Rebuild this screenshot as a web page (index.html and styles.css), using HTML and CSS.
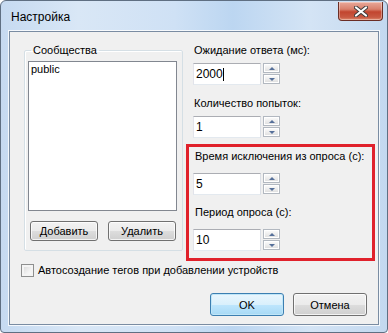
FILE: index.html
```html
<!DOCTYPE html>
<html lang="ru">
<head>
<meta charset="utf-8">
<title>Настройка</title>
<link rel="stylesheet" href="styles.css">
</head>
<body>
<div class="window">
  <div class="titlebar">
    <span class="title">Настройка</span>
    <div class="close">
      <svg width="14" height="11" viewBox="0 0 14 11"><path d="M2 1.5 L12 9.5 M12 1.5 L2 9.5" stroke="#3b3b3b" stroke-width="4" stroke-linecap="round"/><path d="M2 1.5 L12 9.5 M12 1.5 L2 9.5" stroke="#ffffff" stroke-width="2.2" stroke-linecap="round"/></svg>
    </div>
  </div>
  <div class="client">
    <div class="main">
      <fieldset class="group">
        <legend>Сообщества</legend>
        <div class="listbox"><div class="item">public</div></div>
        <div class="group-buttons">
          <div class="btn">Добавить</div>
          <div class="btn">Удалить</div>
        </div>
      </fieldset>
      <div class="fields">
        <div class="label">Ожидание ответа (мс):</div>
        <div class="spin-row">
          <div class="input">2000<span class="caret"></span></div>
          <div class="spin"><div class="sb"><span class="up"></span></div><div class="sb"><span class="down"></span></div></div>
        </div>
        <div class="label l2">Количество попыток:</div>
        <div class="spin-row">
          <div class="input">1</div>
          <div class="spin"><div class="sb"><span class="up"></span></div><div class="sb"><span class="down"></span></div></div>
        </div>
        <div class="highlight">
          <div class="label">Время исключения из опроса (с):</div>
          <div class="spin-row r3">
            <div class="input">5</div>
            <div class="spin"><div class="sb"><span class="up"></span></div><div class="sb"><span class="down"></span></div></div>
          </div>
          <div class="label l4">Период опроса (с):</div>
          <div class="spin-row r4">
            <div class="input">10</div>
            <div class="spin"><div class="sb"><span class="up"></span></div><div class="sb"><span class="down"></span></div></div>
          </div>
        </div>
      </div>
    </div>
    <div class="check-row">
      <span class="checkbox"></span>
      <span>Автосоздание тегов при добавлении устройств</span>
    </div>
    <div class="dialog-buttons">
      <div class="btn wide default">OK</div>
      <div class="btn wide">Отмена</div>
    </div>
  </div>
</div>
</body>
</html>
```

FILE: styles.css
```css
* { box-sizing: border-box; }
html, body { margin: 0; padding: 0; background: #ffffff; }
body { font-family: "Liberation Sans", Arial, sans-serif; font-size: 11px; color: #000; }

.window {
  width: 388px;
  height: 333px;
  border: 1px solid #5f6f82;
  border-radius: 6px 6px 4px 4px;
  background: linear-gradient(90deg, #c6daf1 0%, #d9e7f6 20%, #cfe1f5 45%, #bcd6f1 60%, #d4e4f5 80%, #c3d8ef 100%);
  display: flex;
  flex-direction: column;
  padding: 0 8px 7px 8px;
}

.titlebar {
  height: 30px;
  display: flex;
  align-items: flex-start;
  justify-content: space-between;
}
.title {
  font-size: 12px;
  margin: 9px 0 0 2px;
  color: #000;
}
.close {
  width: 45px;
  height: 19px;
  margin: 1px -4px 0 0;
  border: 1px solid #6a2d25;
  border-top: none;
  border-radius: 0 0 4px 4px;
  background: linear-gradient(180deg, #e9a99a 0%, #d9806c 40%, #c2452f 55%, #c85a43 85%, #e08a6e 100%);
  box-shadow: inset 0 0 0 1px rgba(255,255,255,0.35);
  display: flex;
  align-items: center;
  justify-content: center;
}

.client {
  flex: 1;
  background: #f0f0f0;
  border: 1px solid #7a8ca2;
  box-shadow: 0 0 0 1px rgba(255,255,255,0.8);
  display: flex;
  flex-direction: column;
  padding: 12px 0 0 0;
}

.main { display: flex; align-items: flex-start; }

.group {
  margin: 0 0 0 14px;
  width: 159px;
  height: 207px;
  border: 1px solid #d5dfe5;
  border-radius: 2px;
  box-shadow: inset 1px 1px 0 #ffffff;
  padding: 4px 5px 0 3px;
}
.group legend {
  padding: 0 2px;
  margin-left: 3px;
  line-height: 13px;
}
.listbox {
  height: 150px;
  background: #fff;
  border: 1px solid #828790;
  padding: 1px 2px;
}
.item { line-height: 13px; }

.group-buttons {
  display: flex;
  gap: 10px;
  margin: 10px 0 0 2px;
}

.btn {
  height: 20px;
  width: 68px;
  border: 1px solid #707070;
  border-radius: 3px;
  background: linear-gradient(180deg, #f2f2f2 0%, #ebebeb 50%, #dddddd 51%, #cfcfcf 100%);
  box-shadow: inset 0 0 0 1px rgba(255,255,255,0.75);
  display: flex;
  align-items: center;
  justify-content: center;
}
.btn.wide { width: 74px; height: 23px; }
.btn.default {
  border-color: #3c7fb1;
  background: linear-gradient(180deg, #eaf6fd 0%, #d9f0fc 50%, #bee6fd 51%, #a7d9f5 100%);
  box-shadow: inset 0 0 0 1px #c0e6f8;
}

.fields {
  margin-left: 3px;
  width: 190px;
  display: flex;
  flex-direction: column;
  padding-left: 7px;
}
.label { line-height: 13px; padding-left: 1px; }
.l2 { margin-top: 12px; }

.spin-row { display: flex; align-items: flex-start; gap: 2px; margin-top: 6px; }
.input {
  width: 68px;
  height: 22px;
  background: #fff;
  border: 1px solid #abadb3;
  border-right-color: #dbdfe6;
  border-bottom-color: #e3e9ef;
  border-left-color: #e2e3ea;
  padding: 4px 0 0 2px;
  line-height: 13px;
  font-size: 12px;
  display: flex;
  align-items: flex-start;
}
.caret { display: inline-block; width: 1px; height: 13px; background: #000; }

.spin { display: flex; flex-direction: column; gap: 1px; padding-top: 0; }
.sb {
  width: 17px;
  height: 10px;
  border: 1px solid #b2b8c0;
  background: linear-gradient(180deg, #fdfdfd 0%, #eaeaea 60%, #dcdcdc 100%);
  box-shadow: inset 0 0 0 1px #ffffff;
  display: flex;
  align-items: center;
  justify-content: center;
}
.up, .down { width: 0; height: 0; border-left: 3px solid transparent; border-right: 3px solid transparent; }
.up { border-bottom: 3px solid #56709a; }
.down { border-top: 3px solid #56709a; }

.highlight {
  margin: 6px 0 0 -7px;
  width: 189px;
  border: 3px solid #e0212b;
  padding: 3px 0 7px 4px;
}
.highlight .label { padding-left: 2px; }
.r3 { margin-top: 10px; }
.l4 { margin-top: 11px; }
.r4 { margin-top: 10px; }

.check-row {
  display: flex;
  align-items: center;
  gap: 4px;
  margin: 3px 0 0 11px;
  line-height: 13px;
}
.checkbox {
  width: 13px;
  height: 13px;
  border: 1px solid #8e8f8f;
  background: linear-gradient(135deg, #d5d5d5 0%, #f2f2f2 60%, #ffffff 100%);
  box-shadow: inset 0 0 0 2px #f4f4f4;
}

.dialog-buttons {
  display: flex;
  justify-content: flex-end;
  gap: 9px;
  margin-top: 16px;
  padding-right: 11px;
}
```
